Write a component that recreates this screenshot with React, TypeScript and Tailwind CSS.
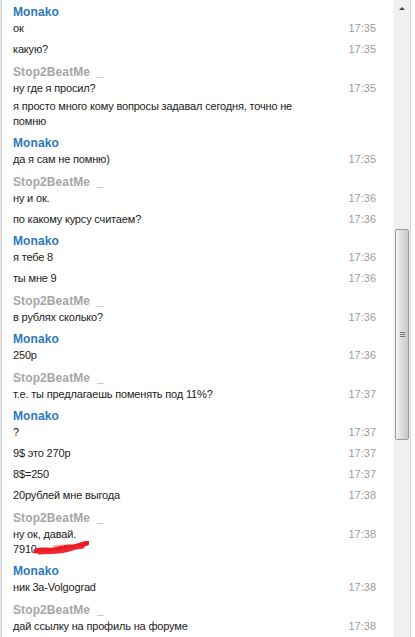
import React from "react";

type Msg = { text: React.ReactNode; time?: string; tight?: boolean };
type Group = { who: "m" | "s"; msgs: Msg[] };

const chat: Group[] = [
  { who: "m", msgs: [{ text: "ок", time: "17:35" }, { text: "какую?", time: "17:35" }] },
  {
    who: "s",
    msgs: [
      { text: "ну где я просил?", time: "17:35" },
      { text: "я просто много кому вопросы задавал сегодня, точно не помню", tight: true },
    ],
  },
  { who: "m", msgs: [{ text: "да я сам не помню)", time: "17:35" }] },
  {
    who: "s",
    msgs: [
      { text: "ну и ок.", time: "17:36" },
      { text: "по какому курсу считаем?", time: "17:36" },
    ],
  },
  {
    who: "m",
    msgs: [
      { text: "я тебе 8", time: "17:36" },
      { text: "ты мне 9", time: "17:36" },
    ],
  },
  { who: "s", msgs: [{ text: "в рублях сколько?", time: "17:36" }] },
  { who: "m", msgs: [{ text: "250р", time: "17:36" }] },
  { who: "s", msgs: [{ text: "т.е. ты предлагаешь поменять под 11%?", time: "17:37" }] },
  {
    who: "m",
    msgs: [
      { text: "?", time: "17:37" },
      { text: "9$ это 270р", time: "17:37" },
      { text: "8$=250", time: "17:37" },
      { text: "20рублей мне выгода", time: "17:38" },
    ],
  },
  {
    who: "s",
    msgs: [
      {
        text: (
          <>
            ну ок, давай.
            <br />
            7910
            <Scribble />
          </>
        ),
        time: "17:38",
      },
    ],
  },
  { who: "m", msgs: [{ text: "ник 3a-Volgograd", time: "17:38" }] },
  { who: "s", msgs: [{ text: "дай ссылку на профиль на форуме", time: "17:38" }] },
];

// red marker over the phone number
function Scribble() {
  return (
    <svg width="56" height="14" viewBox="0 0 56 14" className="inline-block align-middle relative -top-[2px] -ml-[4px]">
      <path d="M3 10 C10 7 16 11 24 8 S38 7 44 5 S52 3 54 2" stroke="#ee1b24" strokeWidth="5" fill="none" strokeLinecap="round" />
      <path d="M6 12 C16 11 26 12 36 9 S46 7 50 6" stroke="#f2262e" strokeWidth="3" fill="none" strokeLinecap="round" />
      <path d="M20 5 L30 4" stroke="#f3b0b0" strokeWidth="1.5" strokeLinecap="round" />
    </svg>
  );
}

function Name({ who }: { who: "m" | "s" }) {
  if (who === "m") {
    return <div className="h-4 leading-4 text-[12px] font-bold text-[#2b78b8] tracking-[0.1px]">Monako</div>;
  }
  return (
    <div className="h-4 leading-4 text-[12px] font-bold text-[#a6a6a6] whitespace-pre tracking-[0.1px]">
      Stop2BeatMe  _
    </div>
  );
}

function App() {
  return (
    <div
      className="w-[415px] h-[637px] flex overflow-hidden bg-white text-[11px] text-[#222]"
      style={{ fontFamily: '"Liberation Sans", Arial, sans-serif' }}
    >
      <div className="w-[1px] bg-[#e8e8e8]" />
      <div className="w-[1px] bg-[#d4d4d4]" />
      <div className="flex-1 flex flex-col pl-[11px] pr-[17px] pt-[4px]">
        {chat.map((g, i) => (
          <div key={i} className={i > 0 ? "mt-[6.5px]" : ""}>
            <Name who={g.who} />
            <div className="flex flex-col">
              {g.msgs.map((m, j) => (
                <div
                  key={j}
                  className={`flex justify-between items-start ${j === 0 ? "mt-[1px]" : m.tight ? "mt-[3px]" : "mt-[6px]"}`}
                >
                  <div className="w-[300px] leading-[15px] tracking-[-0.17px]">{m.text}</div>
                  {m.time && <div className="leading-[15px] text-[#9c9c9c]">{m.time}</div>}
                </div>
              ))}
            </div>
          </div>
        ))}
      </div>
      <div className="w-[17px] flex flex-col bg-[#f0f0f0] border-l border-[#f7f7f7]">
        <div className="h-[17px] flex items-center justify-center">
          <div className="w-0 h-0 border-l-[3px] border-r-[3px] border-b-[3px] border-l-transparent border-r-transparent border-b-[#444]" />
        </div>
        <div className="h-[212px]" />
        <div className="h-[211px] mx-[1px] rounded-[2px] border border-[#9a9a9a] bg-gradient-to-r from-[#f4f4f4] via-[#dcdcdc] to-[#c8c8c8] flex items-center justify-center">
          <div className="flex flex-col gap-[1px]">
            <div className="w-[5px] h-[1px] bg-[#777]" />
            <div className="w-[5px] h-[1px] bg-[#777]" />
            <div className="w-[5px] h-[1px] bg-[#777]" />
          </div>
        </div>
        <div className="flex-1" />
      </div>
      <div className="w-[1px] bg-[#d6d6d6]" />
      <div className="w-[4px] bg-white" />
    </div>
  );
}

export default App;
